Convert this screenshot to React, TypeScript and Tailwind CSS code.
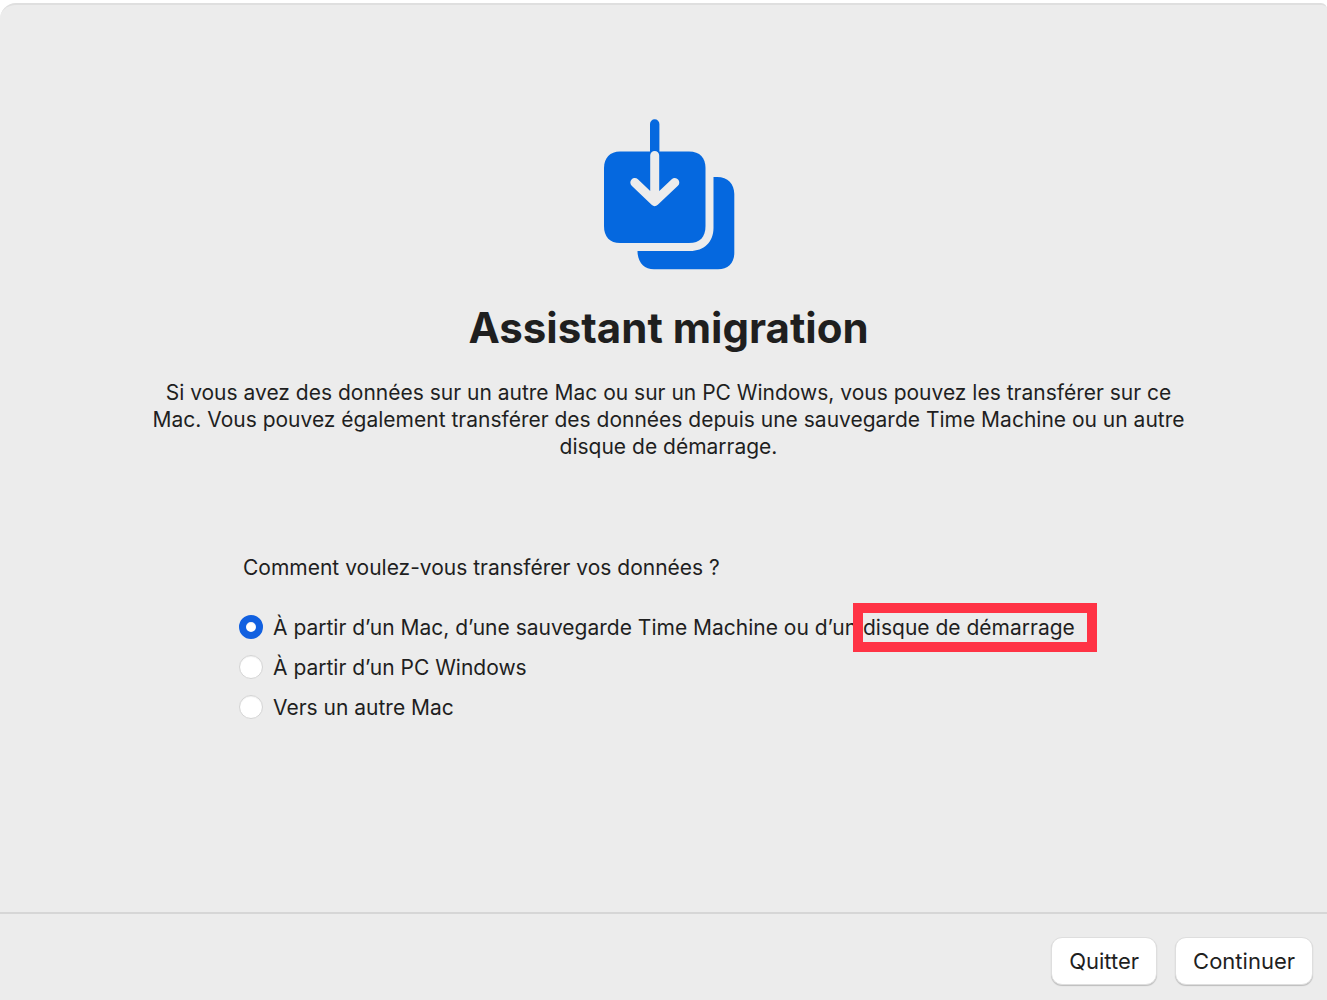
import { useState } from "react";
import type { ReactNode } from "react";

function MigrationIcon() {
  return (
    <svg width="132" height="152" viewBox="603 119 132 152" aria-hidden="true">
      <path
        d="M637.5 251H690C704 251 713.5 242 713.5 228V177H717C728 177 734.3 184 734.3 194V253C734.3 263 728 269.3 718 269.3H654C644 269.3 637.5 262 637.5 251Z"
        fill="#0568df"
      />
      <path
        d="M620 151.5H689C700 151.5 705.5 158 705.5 168V226C705.5 237 700 243 689 243H620C610 243 604 237 604 226V168C604 158 610 151.5 620 151.5Z"
        fill="#0568df"
      />
      <path d="M654.7 156V124" stroke="#0568df" strokeWidth="9.4" strokeLinecap="round" />
      <path
        d="M654.7 155.5V200M634.8 182.5L654.7 201.5L674.8 182.5"
        fill="none"
        stroke="#ececec"
        strokeWidth="9"
        strokeLinecap="round"
        strokeLinejoin="round"
      />
    </svg>
  );
}

type OptionProps = {
  value: string;
  selected: string;
  onSelect: (value: string) => void;
  children: ReactNode;
};

function Option({ value, selected, onSelect, children }: OptionProps) {
  return (
    <label className="flex h-10 items-center gap-[10px]">
      <input
        type="radio"
        name="source"
        value={value}
        checked={selected === value}
        onChange={() => onSelect(value)}
        className="size-6 shrink-0 appearance-none rounded-full border border-[#d4d4d4] bg-white shadow-[inset_0_1px_1px_rgba(0,0,0,0.06)] checked:border-[7px] checked:border-[#1160e0]"
      />
      <span>{children}</span>
    </label>
  );
}

const buttonClass =
  "h-12 rounded-[11px] border border-[#dedede] bg-white px-[17px] text-[22px] shadow-[0_1px_1px_rgba(0,0,0,0.2)]";

export default function App() {
  const [source, setSource] = useState("mac");

  return (
    <div className="flex min-h-screen flex-col bg-white pt-[3px] font-['Inter',sans-serif] text-[21px] leading-[27px] text-[#1f1f1f]">
      <div className="flex grow flex-col rounded-tl-2xl rounded-tr-md border-t-2 border-[#dfdfdf] bg-[#ececec]">
        <main className="flex grow flex-col pt-[114px]">
          <header className="flex flex-col items-center pl-[10px] text-center">
            <MigrationIcon />
            <h1 className="mt-[30px] text-[42px] leading-[54px] font-bold">Assistant migration</h1>
            <p className="mt-6 max-w-[1050px]">
              Si vous avez des données sur un autre Mac ou sur un PC Windows, vous pouvez les transférer sur ce
              Mac. Vous pouvez également transférer des données depuis une sauvegarde Time Machine ou un autre
              disque de démarrage.
            </p>
          </header>
          <fieldset className="mt-[94px] pl-[239px]">
            <legend className="pl-1">Comment voulez-vous transférer vos données ?</legend>
            <div className="mt-[26px]">
              <Option value="mac" selected={source} onSelect={setSource}>
                À partir d’un Mac, d’une sauvegarde Time Machine ou d’un{" "}
                <span className="relative">
                  disque de démarrage
                  <span className="pointer-events-none absolute -top-3 -right-[22px] -bottom-3 -left-[10px] border-[10px] border-[#ff3345]" />
                </span>
              </Option>
              <Option value="pc" selected={source} onSelect={setSource}>
                À partir d’un PC Windows
              </Option>
              <Option value="other" selected={source} onSelect={setSource}>
                Vers un autre Mac
              </Option>
            </div>
          </fieldset>
        </main>
        <footer className="flex justify-end gap-[18px] border-t-2 border-[#d6d6d6] pt-[23px] pr-[14px] pb-[15px]">
          <button type="button" className={buttonClass}>
            Quitter
          </button>
          <button type="button" className={buttonClass}>
            Continuer
          </button>
        </footer>
      </div>
    </div>
  );
}
